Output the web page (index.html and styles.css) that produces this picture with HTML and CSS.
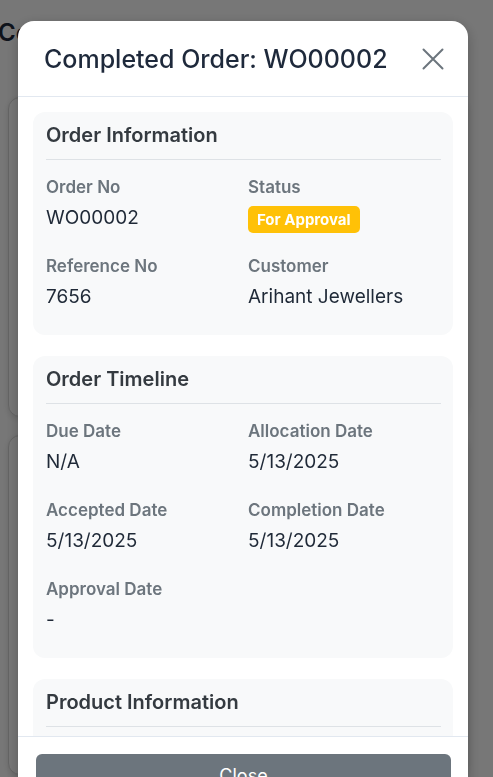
FILE: index.html
```html
<!DOCTYPE html>
<html lang="en">
<head>
<meta charset="utf-8">
<title>Completed Order</title>
<link rel="stylesheet" href="styles.css">
</head>
<body>
<div class="page">
  <h1 class="page-title">Completed Orders</h1>
  <div class="bg-card bg-card-1"></div>
  <div class="bg-card bg-card-2"></div>
</div>
<div class="backdrop"></div>
<div class="modal-wrap">
  <div class="modal">
    <div class="modal-header">
      <h2 class="modal-title">Completed Order: WO00002</h2>
      <button class="close-x" aria-label="Close">
        <svg width="22" height="22" viewBox="0 0 22 22"><path d="M1.5 1.5 L20.5 20.5 M20.5 1.5 L1.5 20.5" stroke="#6c757d" stroke-width="2" stroke-linecap="round" fill="none"/></svg>
      </button>
    </div>
    <div class="modal-body">
      <section class="card">
        <h3 class="card-title">Order Information</h3>
        <div class="fields">
          <div class="field"><div class="label">Order No</div><div class="value">WO00002</div></div>
          <div class="field"><div class="label">Status</div><div class="value"><span class="badge">For Approval</span></div></div>
          <div class="field"><div class="label">Reference No</div><div class="value">7656</div></div>
          <div class="field"><div class="label">Customer</div><div class="value">Arihant Jewellers</div></div>
        </div>
      </section>
      <section class="card">
        <h3 class="card-title">Order Timeline</h3>
        <div class="fields">
          <div class="field"><div class="label">Due Date</div><div class="value">N/A</div></div>
          <div class="field"><div class="label">Allocation Date</div><div class="value">5/13/2025</div></div>
          <div class="field"><div class="label">Accepted Date</div><div class="value">5/13/2025</div></div>
          <div class="field"><div class="label">Completion Date</div><div class="value">5/13/2025</div></div>
          <div class="field"><div class="label">Approval Date</div><div class="value">-</div></div>
        </div>
      </section>
      <section class="card card-last">
        <h3 class="card-title">Product Information</h3>
      </section>
    </div>
    <div class="modal-footer">
      <button class="btn-close">Close</button>
    </div>
  </div>
</div>
</body>
</html>
```
FILE: styles.css
```css
* { box-sizing: border-box; }
html, body { margin: 0; padding: 0; }
body {
  width: 493px;
  height: 777px;
  overflow: hidden;
  background: #ffffff;
  font-family: Inter, "Noto Sans", sans-serif;
  position: relative;
}
.page {
  padding: 17px 0 0 8px;
  display: flex;
  flex-direction: column;
}
.page-title {
  margin: 0 0 0 -10px;
  font-size: 24px;
  line-height: 32px;
  font-weight: 600;
  color: #1e293b;
  white-space: nowrap;
}
.bg-card {
  width: 460px;
  background: #fff;
  border: 1px solid #d8d8d8;
  border-radius: 12px;
  box-shadow: 0 2px 6px rgba(0,0,0,0.12);
}
.bg-card-1 { margin-top: 48px; height: 320px; }
.bg-card-2 { margin-top: 18px; height: 340px; }
.backdrop {
  position: fixed;
  inset: 0;
  background: rgba(0, 0, 0, 0.535);
}
.modal-wrap {
  position: fixed;
  inset: 21px 0 auto 18px;
}
.modal {
  width: 450px;
  background: #fff;
  border-radius: 16px 16px 0 0;
  box-shadow: 0 4px 14px rgba(0,0,0,0.25);
  display: flex;
  flex-direction: column;
}
.modal-header {
  height: 76px;
  border-bottom: 1px solid #e2e8f0;
  display: flex;
  align-items: center;
  justify-content: space-between;
  padding: 0 24px 0 26px;
}
.modal-title {
  margin: 0;
  font-size: 25px;
  line-height: 32px;
  font-weight: 500;
  color: #1e293b;
}
.close-x {
  border: 0;
  background: none;
  padding: 0;
  width: 22px;
  height: 22px;
  display: flex;
}
.modal-body {
  height: 639px;
  overflow: hidden;
  padding: 15px 15px 0;
  display: flex;
  flex-direction: column;
  gap: 21px;
}
.card {
  flex: none;
  background: #f8f9fa;
  border-radius: 12px;
  padding: 9px 12px 25px 13px;
}
.card-last { padding-bottom: 40px; }
.card-title {
  margin: 0 0 15px;
  padding-bottom: 10px;
  border-bottom: 1px solid #dee2e6;
  font-size: 20px;
  line-height: 28px;
  font-weight: 600;
  color: #343a40;
}
.fields {
  display: grid;
  grid-template-columns: 202px 1fr;
  row-gap: 23px;
}
.label {
  font-size: 17px;
  line-height: 24px;
  font-weight: 600;
  color: #6c757d;
  margin-bottom: 5px;
}
.value {
  font-size: 19px;
  line-height: 27px;
  height: 27px;
  color: #1f2937;
}
.badge {
  display: inline-block;
  margin-top: 2px;
  background: #ffc107;
  color: #fff;
  font-size: 15px;
  font-weight: 700;
  line-height: 27px;
  height: 27px;
  padding: 0 9px;
  border-radius: 5px;
  vertical-align: top;
}
.modal-footer {
  border-top: 1px solid #e2e8f0;
  padding: 17px 17px 17px 18px;
}
.btn-close {
  display: block;
  width: 100%;
  border: 0;
  border-radius: 6px;
  background: #6c757d;
  color: #fff;
  font-family: Inter, "Noto Sans", sans-serif;
  font-size: 18px;
  line-height: 27px;
  padding: 8px 12px;
}
```
